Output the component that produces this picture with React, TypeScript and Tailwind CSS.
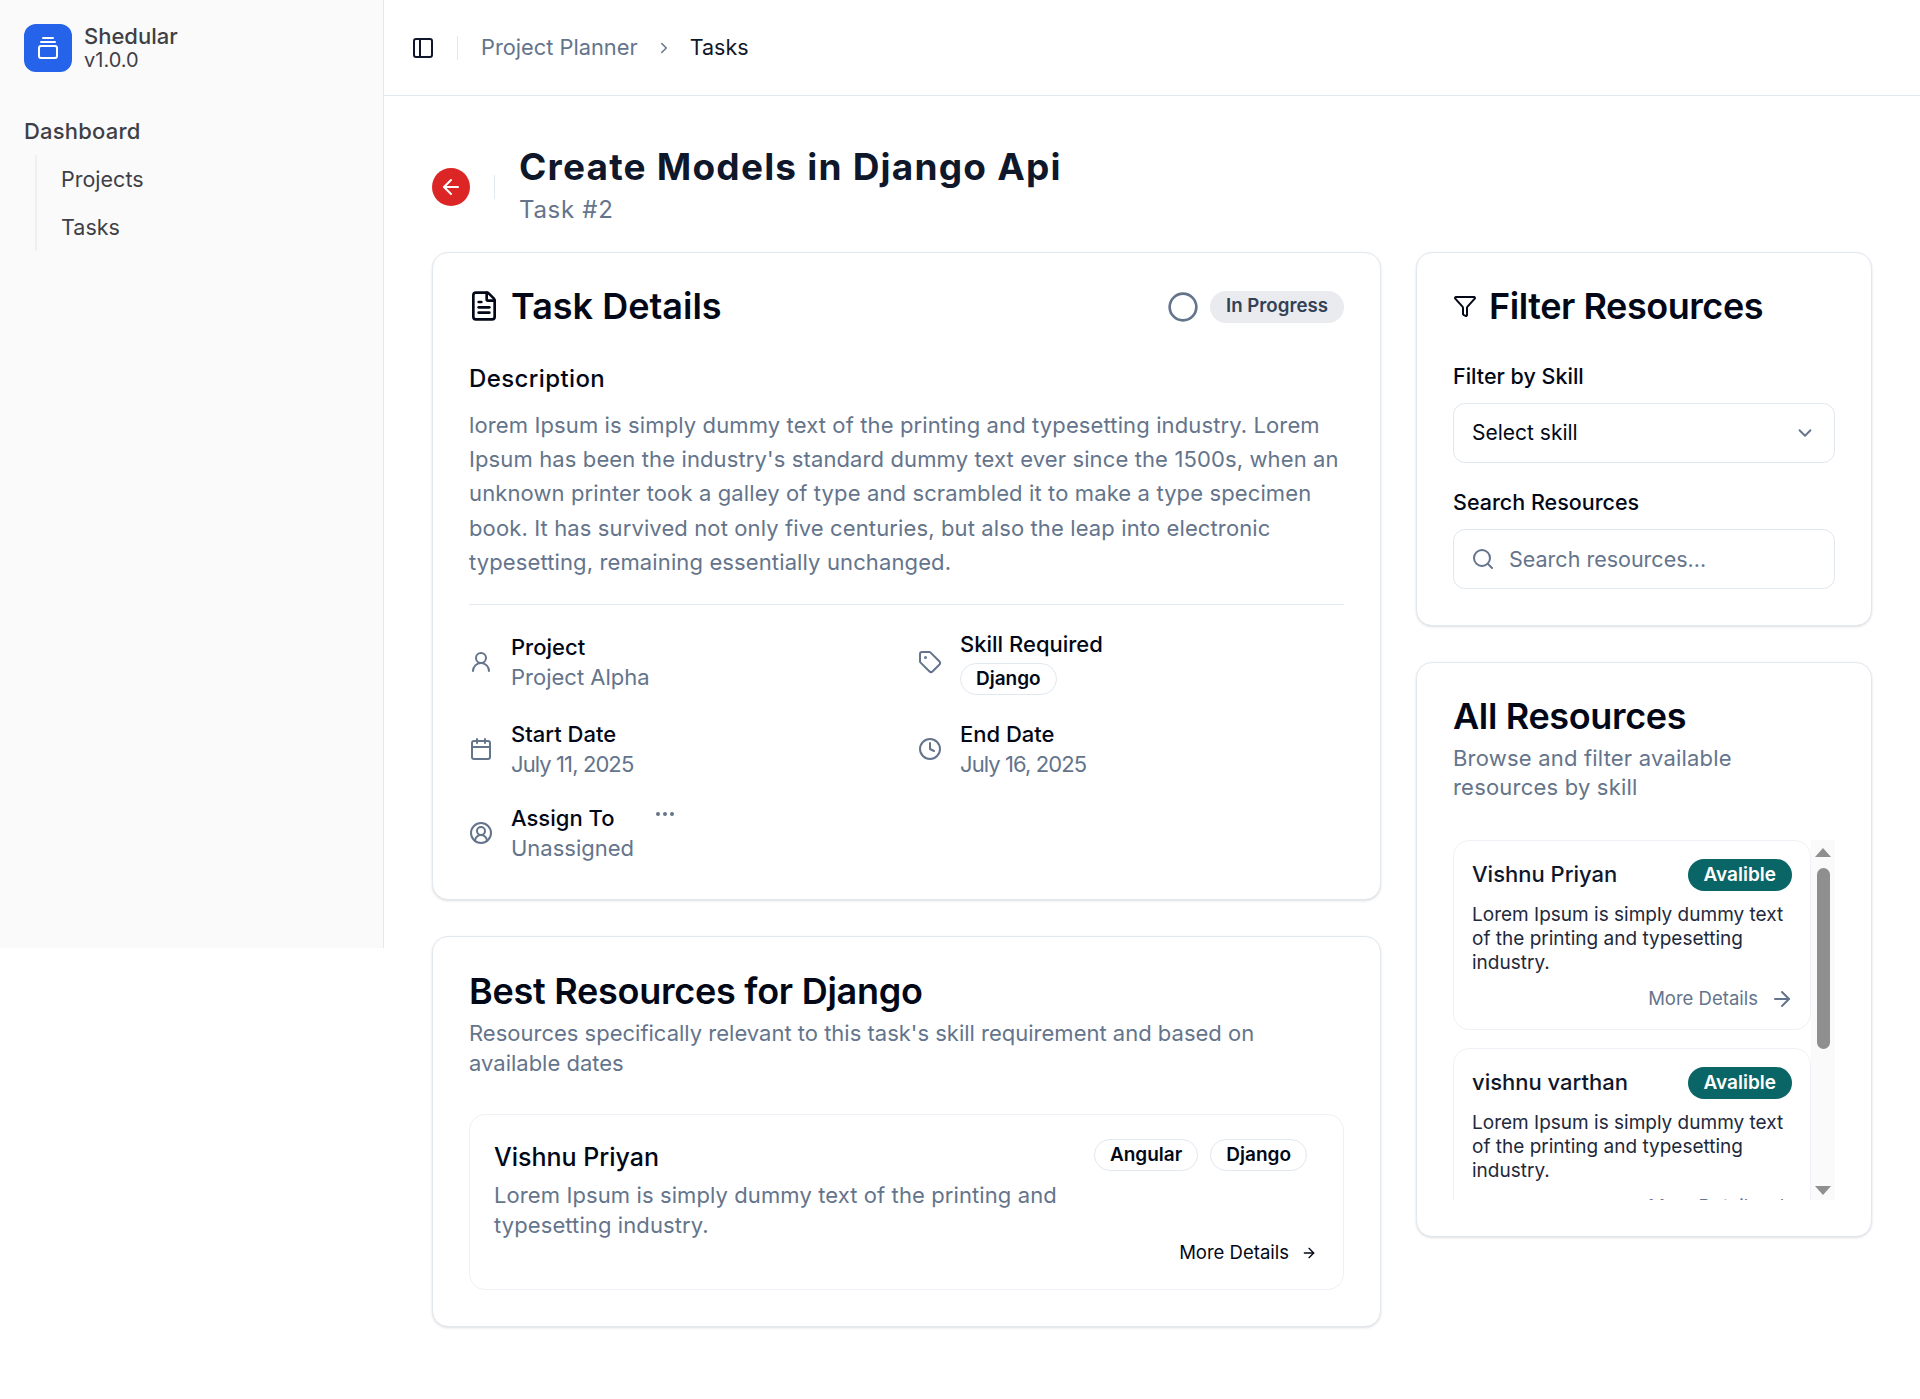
import React from "react";
import {
  ArrowLeft,
  ArrowRight,
  Calendar,
  ChevronDown,
  ChevronRight,
  Circle,
  CircleUserRound,
  Clock,
  Ellipsis,
  FileText,
  Filter,
  GalleryVerticalEnd,
  PanelLeft,
  Search,
  Tag,
  UserRound,
} from "lucide-react";

const Sidebar = () => (
  <aside className="w-[384px] h-[948px] shrink-0 bg-[#fafafa] border-r border-[#e2e8f0] text-[#3f3f46]">
    <div className="flex items-center gap-3 px-6 pt-6">
      <div className="w-12 h-12 rounded-xl bg-[#2563eb] flex items-center justify-center text-white">
        <GalleryVerticalEnd size={24} />
      </div>
      <div className="text-[20px] leading-[24px] font-medium">
        <div className="text-[22px]">Shedular</div>
        <div className="font-normal">v1.0.0</div>
      </div>
    </div>
    <div className="px-6 mt-[43px] text-[22px] tracking-[0.2px] leading-[32px] font-medium">Dashboard</div>
    <div className="ml-[35px] mt-2 border-l-2 border-[#f0f0f2] pl-[24px] text-[21.5px]">
      <div className="h-12 flex items-center">Projects</div>
      <div className="h-12 flex items-center">Tasks</div>
    </div>
  </aside>
);

const Header = () => (
  <header className="h-24 border-b border-[#e2e8f0] flex items-center pl-[27px] text-[21.8px]">
    <PanelLeft size={24} className="text-[#0f172a]" />
    <div className="w-px h-6 bg-[#e2e8f0] ml-[22px] mr-[23px]" />
    <span className="text-[#64748b]">Project Planner</span>
    <ChevronRight size={18} className="text-[#64748b] mx-[17px]" />
    <span className="text-[#0f172a] text-[21.5px]">Tasks</span>
  </header>
);

const DetailItem = ({ icon, label, children }: { icon: React.ReactNode; label: React.ReactNode; children: React.ReactNode }) => (
  <div className="flex items-center gap-[18px]">
    <div className="text-[#64748b] w-6 shrink-0">{icon}</div>
    <div>
      <div className="text-[22px] leading-[30px] font-medium text-[#020817]">{label}</div>
      {children}
    </div>
  </div>
);

const Value = ({ text, tight }: { text: string; tight?: boolean }) => (
  <div className={tight ? "text-[22px] leading-[30px] tracking-[-0.9px] text-[#64748b]" : "text-[22px] leading-[30px] text-[#64748b]"}>
    {text}
  </div>
);

const Pill = ({ text }: { text: string }) => (
  <span className="inline-flex items-center h-8 px-[15px] rounded-full border border-[#e2e8f0] text-[19px] font-semibold text-[#020817]">
    {text}
  </span>
);

const TaskDetails = () => (
  <section className="rounded-2xl border border-[#e2e8f0] shadow-sm bg-white px-9 pt-[33px] pb-9">
    <div className="flex items-center h-10 justify-between">
      <div className="flex items-center gap-[11px]">
        <FileText size={32} className="text-[#020817] -ml-[1px]" />
        <h2 className="text-[36px] leading-10 font-semibold text-[#020817]">Task Details</h2>
      </div>
      <div className="flex items-center gap-[11px] mt-px">
        <Circle size={32} className="text-[#64748b]" />
        <span className="h-8 px-4 flex items-center rounded-full bg-[#e9ebef] text-[18.7px] font-semibold text-[#334155]">In Progress</span>
      </div>
    </div>
    <h3 className="mt-[37px] text-[24px] tracking-[0.4px] leading-8 font-medium text-[#020817]">Description</h3>
    <p className="mt-[13px] text-[22px] tracking-[0.12px] leading-[34.2px] text-[#64748b]">
      lorem Ipsum is simply dummy text of the printing and typesetting industry. Lorem
      <br />
      Ipsum has been the industry's standard dummy text ever since the 1500s, when an
      <br />
      unknown printer took a galley of type and scrambled it to make a type specimen
      <br />
      book. It has survived not only five centuries, but also the leap into electronic
      <br />
      typesetting, remaining essentially unchanged.
    </p>
    <div className="h-px bg-[#e2e8f0] mt-[25px]" />
    <div className="grid grid-cols-[449px_1fr] gap-y-6 mt-6">
      <DetailItem icon={<UserRound size={24} />} label="Project">
        <Value text="Project Alpha" />
      </DetailItem>
      <DetailItem icon={<Tag size={24} />} label="Skill Required">
        <div className="mt-1">
          <Pill text="Django" />
        </div>
      </DetailItem>
      <DetailItem icon={<Calendar size={24} />} label="Start Date">
        <Value text="July 11, 2025" tight />
      </DetailItem>
      <DetailItem icon={<Clock size={24} />} label="End Date">
        <Value text="July 16, 2025" tight />
      </DetailItem>
      <DetailItem
        icon={<CircleUserRound size={24} />}
        label={
          <div className="flex items-center gap-[39px]">
            <span>Assign To</span>
            <Ellipsis size={24} className="text-[#64748b] -mt-2" />
          </div>
        }
      >
        <Value text="Unassigned" />
      </DetailItem>
    </div>
  </section>
);

const BestResources = () => (
  <section className="rounded-2xl border border-[#e2e8f0] shadow-sm bg-white px-9 pt-[34px] pb-9">
    <h2 className="text-[36px] leading-10 font-semibold tracking-[-0.26px] text-[#020817]">Best Resources for Django</h2>
    <p className="mt-[7px] text-[22px] leading-[30px] text-[#64748b]">
      Resources specifically relevant to this task's skill requirement and based on
      <br />
      available dates
    </p>
    <div className="mt-9 rounded-2xl border border-[#eef1f5] h-[176px] px-6 pt-6 relative">
      <div className="flex items-start justify-between pr-[12px]">
        <div className="text-[25px] leading-9 font-medium text-[#020817]">Vishnu Priyan</div>
        <div className="flex gap-3">
          <Pill text="Angular" />
          <Pill text="Django" />
        </div>
      </div>
      <p className="mt-[5px] text-[22px] tracking-[0.1px] leading-[30px] text-[#64748b]">
        Lorem Ipsum is simply dummy text of the printing and
        <br />
        typesetting industry.
      </p>
      <div className="absolute right-[26px] bottom-[22px] flex items-center gap-3 text-[18.5px] text-[#020817]">
        More Details
        <ArrowRight size={16} />
      </div>
    </div>
  </section>
);

const FilterCard = () => (
  <section className="rounded-2xl border border-[#e2e8f0] shadow-sm bg-white px-9 pt-[33px] pb-9">
    <div className="flex items-center gap-3 h-10">
      <Filter size={24} className="text-[#020817]" />
      <h2 className="text-[36px] leading-10 font-semibold tracking-[-0.44px] text-[#020817]">Filter Resources</h2>
    </div>
    <label className="block mt-[34px] text-[21.5px] leading-8 font-medium text-[#020817]">Filter by Skill</label>
    <div className="mt-[11px] h-[60px] rounded-xl border border-[#e2e8f0] flex items-center justify-between px-[18px] text-[21px] text-[#020817]">
      Select skill
      <ChevronDown size={22} className="text-[#64748b]" />
    </div>
    <label className="block mt-[23px] text-[21.5px] leading-8 font-medium text-[#020817]">Search Resources</label>
    <div className="mt-[11px] h-[60px] rounded-xl border border-[#e2e8f0] flex items-center gap-[14px] px-[17px] text-[21.5px] text-[#64748b]">
      <Search size={24} />
      Search resources...
    </div>
  </section>
);

const ResourceRow = ({ name }: { name: string }) => (
  <div className="rounded-2xl border border-[#eef1f5] h-[190px] shrink-0 px-[18px] pt-[18px]">
    <div className="flex items-center justify-between">
      <span className="-mt-0.5 text-[22px] leading-8 font-medium text-[#0f172a]">{name}</span>
      <span className="h-8 px-4 flex items-center rounded-full bg-[#0a6666] text-white text-[19px] font-semibold">Avalible</span>
    </div>
    <p className="mt-3 text-[19px] leading-6 text-[#1e293b]">
      Lorem Ipsum is simply dummy text
      <br />
      of the printing and typesetting
      <br />
      industry.
    </p>
    <div className="mt-[10px] flex items-center justify-end gap-3 -mr-[2px] text-[18.5px] text-[#64748b]">
      More Details
      <ArrowRight size={24} />
    </div>
  </div>
);

const AllResources = () => (
  <section className="rounded-2xl border border-[#e2e8f0] shadow-sm bg-white px-9 pt-[33px] pb-9">
    <h2 className="text-[36px] leading-10 font-semibold tracking-[-0.35px] text-[#020817]">All Resources</h2>
    <p className="mt-2 text-[22px] tracking-[0.2px] leading-[29px] text-[#64748b]">
      Browse and filter available
      <br />
      resources by skill
    </p>
    <div className="mt-[38px] h-[360px] flex overflow-hidden">
      <div className="flex-1 flex flex-col gap-[18px] overflow-hidden">
        <ResourceRow name="Vishnu Priyan" />
        <ResourceRow name="vishnu varthan" />
      </div>
      <div className="w-[24px] bg-[#fafafa] flex flex-col items-center pt-2 pb-[5px]">
        <div className="w-0 h-0 border-x-[8px] border-x-transparent border-b-[9px] border-b-[#8f8f8f]" />
        <div className="w-[13px] h-[181px] bg-[#8f8f8f] rounded-full mt-[11px]" />
        <div className="flex-1" />
        <div className="w-0 h-0 border-x-[8px] border-x-transparent border-t-[9px] border-t-[#8f8f8f]" />
      </div>
    </div>
  </section>
);

export default function App() {
  return (
    <div className="flex min-h-[1399px] bg-white font-[Inter,sans-serif]">
      <Sidebar />
      <div className="flex-1 min-w-0">
        <Header />
        <main className="px-12 pt-[47px]">
          <div className="flex items-center h-[84px]">
            <button className="w-[38px] h-[38px] mt-[3px] rounded-full bg-[#dc2626] text-white flex items-center justify-center">
              <ArrowLeft size={24} />
            </button>
            <div className="w-px h-6 bg-[#e2e8f0] mx-6 mt-[3px]" />
            <div>
              <h1 className="text-[37px] leading-[48px] font-bold tracking-[1.2px] text-[#0f172a]">Create Models in Django Api</h1>
              <div className="mt-px text-[24px] tracking-[0.7px] leading-9 text-[#64748b]">Task #2</div>
            </div>
          </div>
          <div className="flex gap-[35px] mt-[25px] items-start">
            <div className="flex-1 flex flex-col gap-9">
              <TaskDetails />
              <BestResources />
            </div>
            <div className="w-[456px] flex flex-col gap-9">
              <FilterCard />
              <AllResources />
            </div>
          </div>
        </main>
      </div>
    </div>
  );
}
